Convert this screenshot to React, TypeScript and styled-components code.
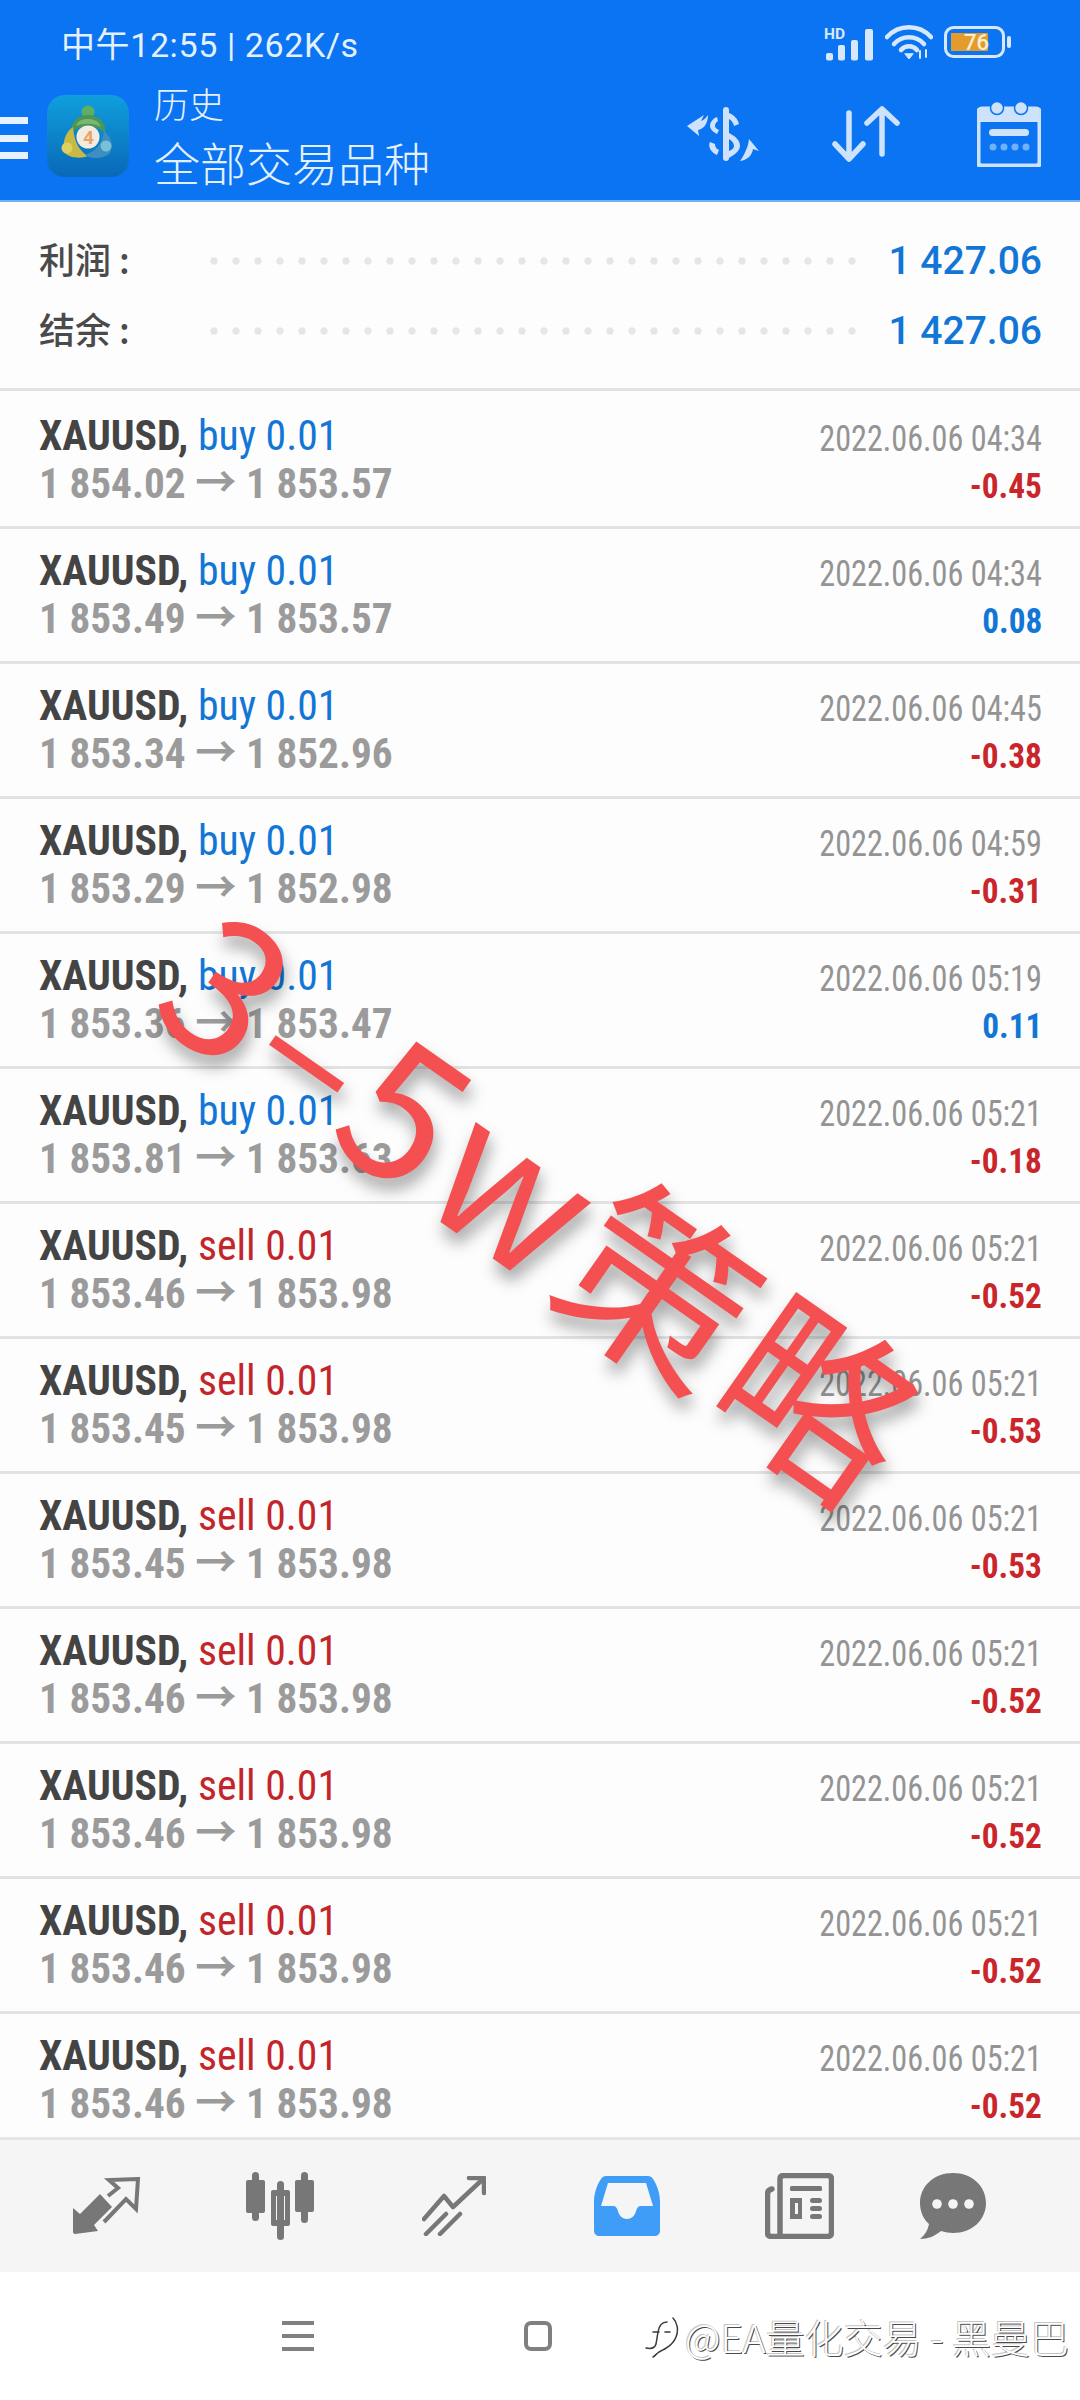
import React from 'react';
import styled, { createGlobalStyle } from 'styled-components';

const GlobalStyle = createGlobalStyle`
  html, body {
    margin: 0;
    padding: 0;
    background: #fdfdfd;
  }
  body {
    font-family: Roboto, "Noto Sans CJK SC", sans-serif;
  }
`;

const Page = styled.div`
  position: relative;
  width: 1080px;
  height: 2400px;
  display: flex;
  flex-direction: column;
  overflow: hidden;
  background: #fdfdfd;
`;

const Header = styled.header`
  height: 202px;
  flex: none;
  display: flex;
  flex-direction: column;
  background: #0a74f2;
  border-bottom: 2px solid #6fb2f8;
  box-sizing: border-box;
  color: #e4f0fd;
`;

const StatusBar = styled.div`
  height: 84px;
  flex: none;
  display: flex;
  align-items: center;
  justify-content: space-between;
  padding: 0 68px 0 61px;
`;

const StatusText = styled.span`
  font-size: 34px;
  font-weight: 400;
  letter-spacing: 0.6px;
  font-family: Roboto, "Noto Sans CJK SC", sans-serif;
`;

const StatusIcons = styled.div`
  display: flex;
  align-items: center;
  gap: 11px;
`;

const Toolbar = styled.div`
  flex: 1;
  display: flex;
  align-items: center;
`;

const MenuBars = styled.div`
  width: 28px;
  height: 42px;
  margin-bottom: 8px;
  flex: none;
  display: flex;
  flex-direction: column;
  justify-content: space-between;
  span {
    height: 7px;
    background: #e8f2fe;
  }
`;

const Logo = styled.svg`
  width: 82px;
  height: 82px;
  margin-left: 19px;
  margin-bottom: 13px;
  flex: none;
`;

const TitleBlock = styled.div`
  margin-left: 25px;
  margin-top: -16px;
  flex: 1;
  display: flex;
  flex-direction: column;
  gap: 13px;
  font-family: "Noto Sans CJK SC", sans-serif;
  font-weight: 300;
`;

const SubTitle = styled.span`
  font-size: 35px;
  line-height: 40px;
`;

const Title = styled.span`
  font-size: 46px;
  line-height: 50px;
`;

const ToolIcons = styled.div`
  display: grid;
  grid-template-columns: repeat(3, 143px);
  justify-items: center;
  align-items: center;
  margin-bottom: 16px;
`;

const Summary = styled.section`
  height: 189px;
  flex: none;
  box-sizing: border-box;
  padding: 28px 38px 0 39px;
  border-bottom: 3px solid #e3e3e3;
  display: flex;
  flex-direction: column;
  gap: 8px;
`;

const SummaryRow = styled.div`
  height: 62px;
  display: flex;
  align-items: center;
`;

const SummaryLabel = styled.span`
  width: 171px;
  flex: none;
  padding-bottom: 6px;
  font-family: "Noto Sans CJK SC", sans-serif;
  font-size: 36px;
  font-weight: 500;
  color: #4a4a4a;
`;

const Dots = styled.span`
  flex: 1;
  height: 8px;
  margin-right: 30px;
  background-image: radial-gradient(circle at 4px 4px, #e6e6e6 3.4px, transparent 4px);
  background-size: 22px 8px;
  background-repeat: repeat-x;
`;

const SummaryValue = styled.span`
  font-size: 39px;
  font-weight: 500;
  color: #1176d6;
`;

const List = styled.main`
  flex: 1;
  min-height: 0;
  padding-top: 3px;
  overflow: hidden;
`;

const Row = styled.div`
  height: 135px;
  box-sizing: border-box;
  padding: 17px 38px 0 39px;
  border-bottom: 3px solid #e3e3e3;
  display: flex;
  justify-content: space-between;
`;

const Col = styled.div<{ $right?: boolean }>`
  display: flex;
  flex-direction: column;
  align-items: ${(p) => (p.$right ? 'flex-end' : 'flex-start')};
  padding-top: ${(p) => (p.$right ? '4px' : '0')};
`;

const Line = styled.div<{ $right?: boolean; $squeeze: number }>`
  height: 48px;
  line-height: 48px;
  white-space: nowrap;
  font-stretch: 75%;
  transform: scaleX(${(p) => p.$squeeze});
  transform-origin: ${(p) => (p.$right ? 'right' : 'left')} center;
`;

const Symbol = styled.span`
  font-size: 43px;
  font-weight: 700;
  color: #444444;
`;

const Side = styled.span<{ $sell: boolean }>`
  font-size: 43px;
  color: ${(p) => (p.$sell ? '#c2262b' : '#1176d6')};
`;

const Prices = styled.span`
  font-size: 43px;
  font-weight: 700;
  color: #9b9b9b;
`;

const DateText = styled.span`
  font-size: 37px;
  color: #949494;
`;

const Amount = styled.span<{ $loss: boolean }>`
  font-size: 35px;
  font-weight: 700;
  color: ${(p) => (p.$loss ? '#c9252b' : '#1176d6')};
`;

const TabBar = styled.nav`
  height: 135px;
  flex: none;
  background: #f5f5f5;
  border-top: 3px solid #e6e6e6;
  box-sizing: border-box;
  display: grid;
  grid-template-columns: 172px 174px 173px 173px 173px 134px;
  padding-left: 21px;
  align-items: center;
  justify-items: center;
`;

const SystemBar = styled.div`
  height: 128px;
  flex: none;
  background: #ffffff;
  display: flex;
  align-items: center;
  padding: 0 11px 0 282px;
`;

const NavLines = styled.div`
  width: 32px;
  height: 30px;
  display: flex;
  flex-direction: column;
  justify-content: space-between;
  span {
    height: 4px;
    background: #808080;
  }
`;

const NavSquare = styled.div`
  width: 28px;
  height: 30px;
  margin-left: 210px;
  border: 4px solid #808080;
  border-radius: 7px;
  box-sizing: border-box;
`;

const Credit = styled.div`
  margin-left: auto;
  display: flex;
  align-items: center;
  gap: 6px;
  font-family: "Noto Sans CJK SC", sans-serif;
  font-size: 39px;
  font-weight: 300;
  color: #ffffff;
  white-space: nowrap;
  text-shadow: 1px 1px 0 #4a4a4a, -1px -1px 0 #c4c4c4;
`;

const Stamp = styled.div`
  position: absolute;
  left: 549px;
  top: 1198px;
  transform: translate(-50%, -50%) rotate(35deg);
  font-family: "Noto Sans CJK SC", sans-serif;
  font-size: 188px;
  font-weight: 400;
  letter-spacing: 6px;
  line-height: 1;
  color: #f45052;
  white-space: nowrap;
  text-shadow: 8px 8px 16px rgba(0, 0, 0, 0.35);
`;

type Trade = {
  side: 'buy' | 'sell';
  open: string;
  close: string;
  time: string;
  profit: string;
};

const trades: Trade[] = [
  { side: 'buy', open: '1 854.02', close: '1 853.57', time: '04:34', profit: '-0.45' },
  { side: 'buy', open: '1 853.49', close: '1 853.57', time: '04:34', profit: '0.08' },
  { side: 'buy', open: '1 853.34', close: '1 852.96', time: '04:45', profit: '-0.38' },
  { side: 'buy', open: '1 853.29', close: '1 852.98', time: '04:59', profit: '-0.31' },
  { side: 'buy', open: '1 853.36', close: '1 853.47', time: '05:19', profit: '0.11' },
  { side: 'buy', open: '1 853.81', close: '1 853.63', time: '05:21', profit: '-0.18' },
  { side: 'sell', open: '1 853.46', close: '1 853.98', time: '05:21', profit: '-0.52' },
  { side: 'sell', open: '1 853.45', close: '1 853.98', time: '05:21', profit: '-0.53' },
  { side: 'sell', open: '1 853.45', close: '1 853.98', time: '05:21', profit: '-0.53' },
  { side: 'sell', open: '1 853.46', close: '1 853.98', time: '05:21', profit: '-0.52' },
  { side: 'sell', open: '1 853.46', close: '1 853.98', time: '05:21', profit: '-0.52' },
  { side: 'sell', open: '1 853.46', close: '1 853.98', time: '05:21', profit: '-0.52' },
  { side: 'sell', open: '1 853.46', close: '1 853.98', time: '05:21', profit: '-0.52' },
];

const SignalIcon = () => (
  <svg width="50" height="37" viewBox="0 0 50 37">
    <text x="0" y="15" fontSize="15.5" fontWeight="700" fontFamily="Roboto, sans-serif" fill="#d8e8fc">HD</text>
    <rect x="2" y="29" width="7" height="7.5" rx="2" fill="#d8e8fc" />
    <rect x="14" y="21" width="7" height="15.5" rx="2" fill="#d8e8fc" />
    <rect x="27" y="16" width="7" height="20.5" rx="2" fill="#d8e8fc" />
    <rect x="41" y="5" width="8" height="31.5" rx="2" fill="#d8e8fc" />
  </svg>
);

const WifiIcon = () => (
  <svg width="48" height="36" viewBox="0 0 48 36" fill="none" stroke="#d8e8fc" strokeWidth="4.5" strokeLinecap="round">
    <path d="M2 13C14 0 34 0 46 13" />
    <path d="M9 20C17 11 31 11 39 20" />
    <path d="M16 26C20 21 28 21 32 26" />
    <path d="M20 30L24 35L28 30Z" fill="#d8e8fc" strokeWidth="1" />
    <path d="M35 27V34M41 26V33" strokeWidth="2" />
  </svg>
);

const BatteryIcon = () => (
  <svg width="68" height="32" viewBox="0 0 68 32">
    <rect x="1.5" y="1.5" width="58" height="29" rx="8" fill="none" stroke="#d8e8fc" strokeWidth="3" />
    <rect x="7" y="7" width="37" height="18" fill="#e39c2c" />
    <rect x="63" y="10" width="4" height="12" rx="2" fill="#d8e8fc" />
    <text x="20" y="24" fontSize="22" fontFamily="Roboto, sans-serif" fontWeight="500" fill="#fbeecf">76</text>
  </svg>
);

const MtLogo = () => (
  <Logo viewBox="0 0 82 82">
    <defs>
      <linearGradient id="tile" x1="0" y1="0" x2="0" y2="1">
        <stop offset="0" stopColor="#0f9fdc" />
        <stop offset="1" stopColor="#0a68b8" />
      </linearGradient>
    </defs>
    <rect width="82" height="82" rx="18" fill="url(#tile)" />
    <circle cx="41" cy="17" r="6.5" fill="#5fae63" />
    <path d="M25 37C23 26 32 20 41 20C51 20 60 27 58 38C50 30 33 30 25 37Z" fill="#4a9558" />
    <path d="M29 31C31 25 36 24 41 24C47 24 52 26 54 32C46 28 36 28 29 31Z" fill="#7ab66f" />
    <path d="M26 32C17 38 15 50 18 58C22 63 34 64 41 61C32 56 27 46 26 32Z" fill="#c8b846" />
    <circle cx="20" cy="53" r="5.5" fill="#e0d060" />
    <path d="M57 36C65 42 67 52 62 59C55 64 44 64 38 60C48 57 56 48 57 36Z" fill="#3f8fbe" />
    <circle cx="59" cy="51" r="5.5" fill="#78c0d8" />
    <circle cx="41" cy="42" r="11.5" fill="#f3ebdf" />
    <text x="36" y="49" fontSize="19" fontWeight="700" fontFamily="Roboto, sans-serif" fill="#e7a468">4</text>
  </Logo>
);

const DollarIcon = () => (
  <svg width="74" height="56" viewBox="0 0 74 56" fill="#cfe2fb">
    <path d="M37 4a3 3 0 0 1 6 0V52a3 3 0 0 1-6 0Z" />
    <path d="M43 7C48 9 52 13 53 18L48 20C47 16 45 14 43 13Z" />
    <path d="M43 27C49 30 54 34 54 40C54 45 48 49 43 52V45C46 44 48 42 48 40C48 37 46 35 43 33Z" />
    <path d="M31 11C26 13 24 17 24 20C24 23 27 26 31 28L33 24C30 23 29 21 29 20C29 18 30 16 32 15Z" />
    <path d="M24 36C22 40 24 46 31 49L33 44C30 43 29 40 29 38Z" />
    <path d="M1 20L18 9L15 15C18 14 20 12 22 9C22 17 18 23 12 24L13 30Z" />
    <path d="M73 45L63 33L62 39C60 44 58 50 54 55C62 54 66 49 67 43Z" />
  </svg>
);

const SortIcon = () => (
  <svg width="68" height="56" viewBox="0 0 68 56" fill="none" stroke="#cfe2fb" strokeWidth="5.5" strokeLinecap="round" strokeLinejoin="round">
    <path d="M17 7V53M3 38L17 53L31 38" />
    <path d="M50 48V3M35 17L50 3L65 17" />
  </svg>
);

const CalendarIcon = () => (
  <svg width="64" height="66" viewBox="0 0 64 66">
    <path d="M5 8H59a4 4 0 0 1 4 4V61a4 4 0 0 1-4 4H5a4 4 0 0 1-4-4V12a4 4 0 0 1 4-4Z" fill="none" stroke="#cfe2fb" strokeWidth="5" />
    <path d="M3 8H61V21H3Z" fill="#cfe2fb" />
    <circle cx="20" cy="7" r="6.5" fill="#cfe2fb" stroke="#0a74f2" strokeWidth="1.5" />
    <circle cx="44" cy="7" r="6.5" fill="#cfe2fb" stroke="#0a74f2" strokeWidth="1.5" />
    <rect x="12" y="28" width="40" height="7" rx="3.5" fill="#cfe2fb" />
    <circle cx="16" cy="46" r="3.5" fill="#6fb2f8" />
    <circle cx="27" cy="46" r="3.5" fill="#6fb2f8" />
    <circle cx="38" cy="46" r="3.5" fill="#6fb2f8" />
    <circle cx="49" cy="46" r="3.5" fill="#6fb2f8" />
  </svg>
);

const TradeIcon = () => (
  <svg width="68" height="58" viewBox="0 0 68 58">
    <path d="M0 31L7 37L27 17L39 30L21 48L25 54L2 57Q0 57 0 55Z" fill="#777777" />
    <path d="M31 45L53 22L63 32L65 2L36 3L45 11L35 19" fill="none" stroke="#777777" strokeWidth="4" strokeLinejoin="miter" />
  </svg>
);

const CandlesIcon = () => (
  <svg width="68" height="68" viewBox="0 0 68 68" fill="#777777">
    <rect x="6" y="0" width="7" height="49" rx="3.5" />
    <rect x="0" y="8" width="19" height="33" rx="2" />
    <rect x="31" y="9" width="7" height="59" rx="3.5" />
    <path d="M27 18H42Q44 18 44 20V52Q44 54 42 54H27Q25 54 25 52V20Q25 18 27 18ZM30 24V48H39V24Z" fillRule="evenodd" />
    <rect x="55" y="0" width="7" height="51" rx="3.5" />
    <rect x="49" y="8" width="19" height="32" rx="2" />
  </svg>
);

const TrendIcon = () => (
  <svg width="64" height="60" viewBox="0 0 64 60" fill="none" stroke="#777777" strokeWidth="4.5" strokeLinecap="round" strokeLinejoin="round">
    <path d="M2 43L22 20L31 31L61 3" />
    <path d="M47 2H62V17" />
    <path d="M4 58L24 38M18 58L38 38" />
  </svg>
);

const InboxIcon = () => (
  <svg width="66" height="60" viewBox="0 0 66 60">
    <path d="M12 0H54C56 0 58 1 59 3C63 9 66 17 66 26V54C66 58 64 60 60 60H6C2 60 0 58 0 54V26C0 17 3 9 7 3C8 1 10 0 12 0Z" fill="#3f9cf7" />
    <path d="M14 7H52L59 30H47C44 30 43 32 42 35C41 40 37 43 33 43C29 43 25 40 24 35C23 32 22 30 19 30H7Z" fill="#f5f5f5" />
  </svg>
);

const NewsIcon = () => (
  <svg width="69" height="66" viewBox="0 0 69 66">
    <path d="M15 63V6Q15 2.500 19 2.500H62.500Q66.500 2.500 66.500 6V59.500Q66.500 63.500 62.500 63.500H6.500Q2.500 63.500 2.500 59.500V21Q2.500 17 7 16" fill="none" stroke="#777777" strokeWidth="5.500" strokeLinecap="round" />
    <rect x="25" y="13" width="32" height="5" rx="1.500" fill="#777777" />
    <path d="M25 25H37V46H25ZM30 30V41H33V30Z" fill="#777777" fillRule="evenodd" />
    <rect x="45" y="25" width="12" height="5" rx="2.500" fill="#777777" />
    <rect x="45" y="33" width="12" height="5" rx="2.500" fill="#777777" />
    <rect x="45" y="41" width="12" height="5" rx="2.500" fill="#777777" />
  </svg>
);

const ChatIcon = () => (
  <svg width="66" height="66" viewBox="0 0 66 66">
    <path d="M33 0C52 0 66 13 66 30C66 47 52 60 33 60C29 60 25 59 21 58C15 63 8 66 0 66C5 62 8 57 9 51C3 46 0 38 0 30C0 13 14 0 33 0Z" fill="#777777" />
    <circle cx="17" cy="31" r="4.800" fill="#f5f5f5" />
    <circle cx="33" cy="31" r="4.800" fill="#f5f5f5" />
    <circle cx="49" cy="31" r="4.800" fill="#f5f5f5" />
  </svg>
);

const NoteIcon = () => (
  <svg width="36" height="44" viewBox="0 0 36 44" fill="none" stroke="#3a3a3a" strokeWidth="1.500" strokeLinecap="round">
    <path d="M30 4C34 8 36 16 33 23C30 31 22 35 16 38C13 40 12 42 10 43" />
    <path d="M24 8C18 8 16 12 15 18L13 30C12 34 8 35 3 34" />
    <path d="M10 18H16M22 18H27" />
  </svg>
);

export default function App() {
  return (
    <Page>
      <GlobalStyle />
      <Header>
        <StatusBar>
          <StatusText>中午12:55 | 262K/s</StatusText>
          <StatusIcons>
            <SignalIcon />
            <WifiIcon />
            <BatteryIcon />
          </StatusIcons>
        </StatusBar>
        <Toolbar>
          <MenuBars>
            <span />
            <span />
            <span />
          </MenuBars>
          <MtLogo />
          <TitleBlock>
            <SubTitle>历史</SubTitle>
            <Title>全部交易品种</Title>
          </TitleBlock>
          <ToolIcons>
            <DollarIcon />
            <SortIcon />
            <CalendarIcon />
          </ToolIcons>
        </Toolbar>
      </Header>

      <Summary>
        <SummaryRow>
          <SummaryLabel>利润 :</SummaryLabel>
          <Dots />
          <SummaryValue>1 427.06</SummaryValue>
        </SummaryRow>
        <SummaryRow>
          <SummaryLabel>结余 :</SummaryLabel>
          <Dots />
          <SummaryValue>1 427.06</SummaryValue>
        </SummaryRow>
      </Summary>

      <List>
        {trades.map((t, i) => (
          <Row key={i}>
            <Col>
              <Line $squeeze={0.97}>
                <Symbol>XAUUSD, </Symbol>
                <Side $sell={t.side === 'sell'}>{t.side} 0.01</Side>
              </Line>
              <Line $squeeze={0.96}>
                <Prices>
                  {t.open} → {t.close}
                </Prices>
              </Line>
            </Col>
            <Col $right>
              <Line $right $squeeze={0.87}>
                <DateText>2022.06.06 {t.time}</DateText>
              </Line>
              <Line $right $squeeze={0.95}>
                <Amount $loss={t.profit.startsWith('-')}>{t.profit}</Amount>
              </Line>
            </Col>
          </Row>
        ))}
      </List>

      <TabBar>
        <TradeIcon />
        <CandlesIcon />
        <TrendIcon />
        <InboxIcon />
        <NewsIcon />
        <ChatIcon />
      </TabBar>

      <SystemBar>
        <NavLines>
          <span />
          <span />
          <span />
        </NavLines>
        <NavSquare />
        <Credit>
          <NoteIcon />
          @EA量化交易 - 黑曼巴
        </Credit>
      </SystemBar>

      <Stamp>3–5w策略</Stamp>
    </Page>
  );
}
